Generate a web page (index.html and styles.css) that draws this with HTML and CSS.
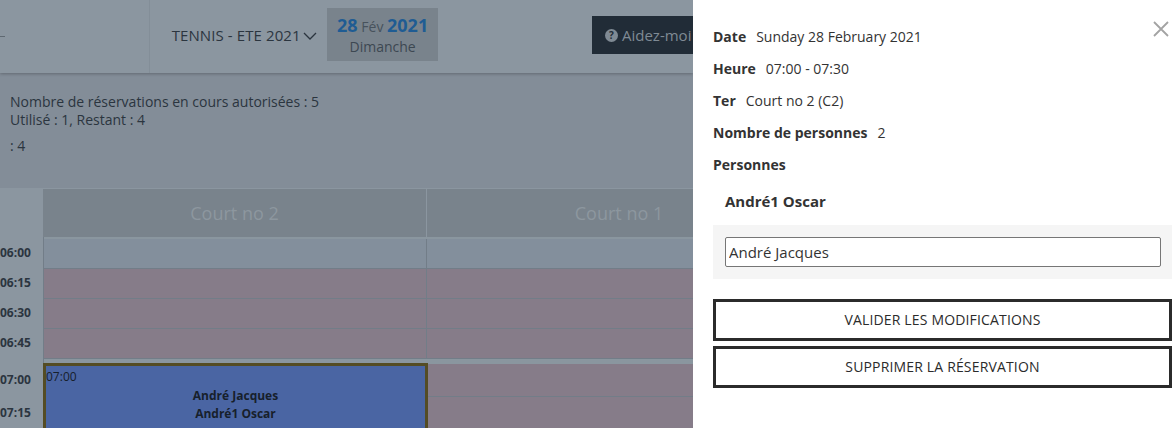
FILE: index.html
```html
<!DOCTYPE html>
<html lang="fr">
<head>
    <meta charset="UTF-8">
    <meta name="viewport" content="width=device-width, initial-scale=1.0">
    <title>Réservation - Tennis</title>
    <link rel="stylesheet" href="styles.css">
</head>
<body>

    <div class="page">
        <!-- Page de fond (assombrie) -->
        <div class="main">
            <div class="topbar">
                <div class="logo-cell"><span class="back-mark"></span></div>
                <div class="season">
                    TENNIS - ETE 2021
                    <svg class="chevron" width="14" height="8" viewBox="0 0 14 8"><path d="M1 1l6 6 6-6" fill="none" stroke="#2b353f" stroke-width="1.3"/></svg>
                </div>
                <div class="date-box">
                    <div class="date-line"><b>28</b> <span>Fév</span> <b>2021</b></div>
                    <div class="date-day">Dimanche</div>
                </div>
                <div class="help-button"><span class="help-icon">?</span>Aidez-moi</div>
            </div>

            <div class="info">
                <div>Nombre de réservations en cours autorisées : 5</div>
                <div>Utilisé : 1, Restant : 4</div>
                <div class="info-last">: 4</div>
            </div>

            <div class="planning">
                <div class="corner"></div>
                <div class="court">Court no 2</div>
                <div class="court court-last">Court no 1</div>

                <div class="hours">
                    <div class="hour">06:00</div>
                    <div class="hour">06:15</div>
                    <div class="hour">06:30</div>
                    <div class="hour">06:45</div>
                </div>
                <div class="slots">
                    <div class="slot"></div>
                    <div class="slot closed"></div>
                    <div class="slot closed"></div>
                    <div class="slot closed"></div>
                </div>
                <div class="slots slots-last">
                    <div class="slot"></div>
                    <div class="slot closed"></div>
                    <div class="slot closed"></div>
                    <div class="slot closed"></div>
                </div>

                <div class="hours hours-late">
                    <div class="hour hour-late">07:00</div>
                    <div class="hour hour-late">07:15</div>
                </div>
                <div class="booking">
                    <div class="booking-time">07:00</div>
                    <div class="booking-name">André Jacques</div>
                    <div class="booking-name">André1 Oscar</div>
                </div>
                <div class="slots slots-last slots-late">
                    <div class="slot slot-late closed"></div>
                    <div class="slot slot-late closed"></div>
                </div>
            </div>
        </div>

        <!-- Panneau de détail -->
        <div class="panel">
            <svg class="close" width="16" height="16" viewBox="0 0 16 16"><path d="M1 1l14 14M15 1L1 15" fill="none" stroke="#a3a3a3" stroke-width="1.8"/></svg>
            <div class="row"><b>Date</b>Sunday 28 February 2021</div>
            <div class="row"><b>Heure</b>07:00 - 07:30</div>
            <div class="row"><b>Ter</b>Court no 2 (C2)</div>
            <div class="row"><b>Nombre de personnes</b>2</div>
            <div class="row"><b>Personnes</b></div>
            <div class="person">André1 Oscar</div>
            <div class="person-edit">
                <input class="person-input" type="text" value="André Jacques">
            </div>
            <button class="action first">VALIDER LES MODIFICATIONS</button>
            <button class="action">SUPPRIMER LA RÉSERVATION</button>
        </div>
    </div>

</body>
</html>
```

FILE: styles.css
```css
html, body {
    height: 100%;
    margin: 0;
    overflow: hidden;
    font-family: "Open Sans", Arial, sans-serif;
    font-size: 14px;
}

.page {
    display: flex;
    height: 428px;
    overflow: hidden;
}

/* Fond assombri */
.main {
    width: 693px;
    flex: none;
    overflow: hidden;
    background-color: #838d98;
    color: #2b353f;
}

.topbar {
    display: flex;
    align-items: center;
    height: 73px;
    background-color: #8b96a0;
    box-shadow: 0 1px 3px rgba(0, 0, 0, 0.25);
    position: relative;
}

.logo-cell {
    display: flex;
    align-items: center;
    width: 149px;
    height: 100%;
    border-right: 1px solid #838e98;
}

.back-mark {
    width: 5px;
    height: 1px;
    background-color: #5f6972;
}

.season {
    display: flex;
    align-items: center;
    gap: 2px;
    margin-left: 22px;
    width: 156px;
    font-size: 15px;
    letter-spacing: 0.1px;
    white-space: nowrap;
    margin-bottom: 3px;
}

.chevron {
    margin-top: 2px;
    flex: none;
}

.date-box {
    width: 111px;
    height: 53px;
    background-color: #79838c;
    text-align: center;
    margin-bottom: 4px;
}

.date-line {
    margin-top: 6px;
    line-height: 23px;
    font-size: 14px;
    color: #47525c;
}

.date-line b {
    font-size: 18px;
    font-weight: 700;
    color: #1f5c93;
}

.date-day {
    line-height: 18px;
    font-size: 14px;
    color: #3d4852;
}

.help-button {
    display: flex;
    align-items: center;
    flex: none;
    width: 101px;
    height: 38px;
    margin-left: 154px;
    margin-bottom: 3px;
    padding-left: 13px;
    box-sizing: border-box;
    background-color: #212c37;
    color: #7f8a94;
    font-size: 15px;
    white-space: nowrap;
}

.help-icon {
    display: inline-block;
    flex: none;
    width: 13px;
    height: 13px;
    margin-right: 4px;
    border-radius: 50%;
    background-color: #7f8a94;
    color: #212c37;
    font-size: 10px;
    font-weight: 700;
    line-height: 13px;
    text-align: center;
}

.info {
    height: 115px;
    box-sizing: border-box;
    padding: 20px 10px 0;
    line-height: 18px;
    font-size: 14px;
}

.info-last {
    margin-top: 8px;
}

.planning {
    display: grid;
    grid-template-columns: 43px 384px 384px;
    border-top: 1px solid #8b96a0;
}

.corner {
    height: 48px;
    background-color: #8b96a0;
}

.court {
    height: 48px;
    background-color: #79838c;
    border-right: 1px solid #8b96a0;
    color: #8d979f;
    font-size: 18px;
    line-height: 48px;
    text-align: center;
    box-sizing: border-box;
}

.court-last {
    border-right: none;
}

.hours {
    padding-top: 2px;
    background-color: #8b96a0;
}

.hour {
    height: 30px;
    line-height: 28px;
    font-size: 12px;
    font-weight: 700;
    white-space: nowrap;
}

.hours-late {
    padding-top: 1px;
}

.hour-late {
    height: 33px;
    line-height: 32px;
}

.slots {
    padding-top: 2px;
    padding-bottom: 4px;
    background-color: #8a969f;
    border-left: 1px solid #727d88;
    box-sizing: border-box;
}

.slots-last {
    border-left: none;
}

.slots-late {
    padding-top: 1px;
    padding-bottom: 0;
}

.slot {
    height: 30px;
    box-sizing: border-box;
    background-color: #838f9c;
    border-bottom: 1px solid #727d88;
    border-right: 1px solid #727d88;
}

.slot.closed {
    background-color: #867c89;
}

.slots-last .slot {
    border-right: none;
}

.slot-late {
    height: 33px;
}

.booking {
    height: 80px;
    margin-right: -1px;
    box-sizing: border-box;
    background-color: #4a65a3;
    border: 3px solid #544c24;
    color: #17202b;
    font-size: 12px;
    position: relative;
}

.booking-time {
    line-height: 18px;
    margin-top: 2px;
}

.booking-name {
    line-height: 18px;
    font-weight: 700;
    text-align: center;
}

.booking-time + .booking-name {
    margin-top: 1px;
}

/* Panneau de droite */
.panel {
    flex: 1;
    position: relative;
    box-sizing: border-box;
    padding-top: 21px;
    padding-left: 20px;
    background-color: #fff;
    color: #333;
}

.close {
    position: absolute;
    top: 21px;
    right: 3px;
}

.row {
    height: 32px;
    line-height: 32px;
    font-size: 14px;
    white-space: nowrap;
}

.row b {
    margin-right: 10px;
    font-weight: 700;
}

.person {
    margin-top: 4px;
    padding-left: 12px;
    font-size: 15px;
    line-height: 32px;
    font-weight: 700;
}

.person-edit {
    height: 54px;
    margin-top: 8px;
    padding: 12px 11px 0 12px;
    box-sizing: border-box;
    background-color: #f5f5f5;
}

.person-input {
    display: block;
    width: 100%;
    height: 30px;
    box-sizing: border-box;
    padding: 0 3px;
    border: 1px solid #767676;
    border-radius: 2px;
    background-color: #fff;
    color: #333;
    font-family: inherit;
    font-size: 15px;
}

.action {
    display: block;
    width: 100%;
    height: 42px;
    margin-top: 5px;
    padding: 0 0 2px;
    border: 3px solid #2b2b2b;
    background-color: #fff;
    color: #2b2b2b;
    font-family: inherit;
    font-size: 14px;
    letter-spacing: 0.16px;
}

.action.first {
    margin-top: 20px;
}
```
